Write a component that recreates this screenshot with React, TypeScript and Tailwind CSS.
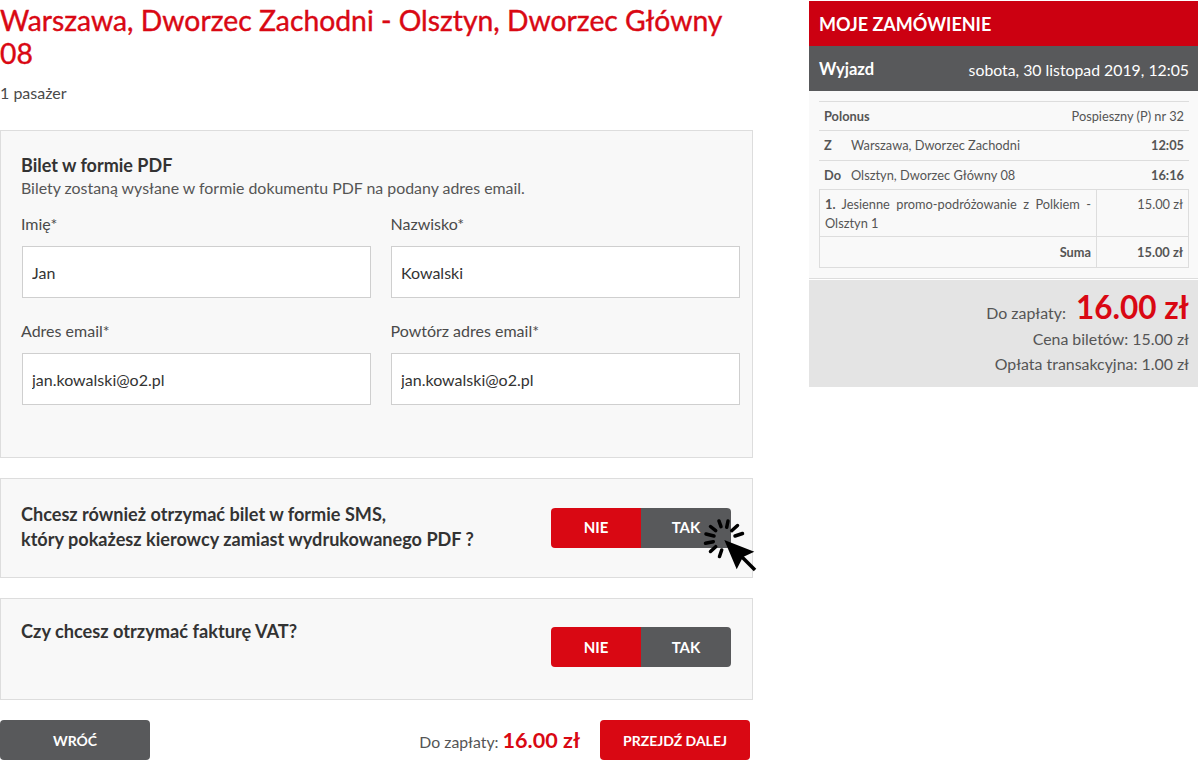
import React from "react";

function Field({ label, value, outdent }: { label: string; value: string; outdent?: boolean }) {
  return (
    <div className="w-[349px]">
      <div className={outdent ? "text-[16px] leading-[20px] text-[#4a4a4a] -ml-px mb-3" : "text-[16px] leading-[20px] text-[#4a4a4a] -ml-[0.5px] mb-3"}>
        {label}
      </div>
      <input
        readOnly
        value={value}
        className="block w-full h-[52px] px-[9px] border border-[#cfcfcf] bg-white text-[16px] text-[#333] outline-none"
      />
    </div>
  );
}

function Toggle() {
  return (
    <div className="flex w-[180px] h-10 text-[15px] font-bold text-white">
      <div className="w-[90px] flex items-center justify-center bg-[#d90813] rounded-l">NIE</div>
      <div className="w-[90px] flex items-center justify-center bg-[#58595b] rounded-r">TAK</div>
    </div>
  );
}

function ClickCursor() {
  return (
    <svg className="absolute left-[702px] top-[517px]" width="56" height="56" viewBox="0 0 56 56">
      <path d="M22.300 23 L52.300 34.700 L41 40 L34.700 52.300 Z" fill="#000" />
      <path d="M38 38 L53 53" stroke="#000" strokeWidth="3.5" />
      <g stroke="#000" strokeWidth="3.500" strokeLinecap="round">
        <path d="M17 4 L19 9.700" />
        <path d="M26 4 L24.700 10.300" />
        <path d="M35.500 8.500 L29.700 13.700" />
        <path d="M40.500 16.500 L33 19" />
        <path d="M8.500 9.500 L13.700 13.700" />
        <path d="M4 17 L12 19" />
        <path d="M3.500 26.300 L11.300 24.700" />
        <path d="M8.500 34.500 L13.700 29.700" />
        <path d="M17.500 39.500 L19.700 33" />
      </g>
    </svg>
  );
}

export default function App() {
  return (
    <div className="relative w-[1198px] h-[770px] overflow-hidden bg-white font-['Lato','Open_Sans',sans-serif] text-[#4a4a4a]">
      <div className="flex items-start">
        <div className="w-[753px] shrink-0">
          <h1 className="w-[740px] mt-[4px] text-[28.3px] leading-[33px] font-normal text-[#d90813] [-webkit-text-stroke:0.4px_#d90813]">
            Warszawa, Dworzec Zachodni - Olsztyn, Dworzec Główny 08
          </h1>
          <div className="mt-[13px] text-[16px] leading-[20px]">1 pasażer</div>

          <div className="mt-[27px] h-[328px] border border-[#dddddd] bg-[#f8f8f8] pl-5 pt-[23px]">
            <div className="text-[18px] leading-[22px] font-bold text-[#333]">Bilet w formie PDF</div>
            <div className="text-[15.9px] leading-[20px] mt-[2px] text-[#555]">
              Bilety zostaną wysłane w formie dokumentu PDF na podany adres email.
            </div>
            <div className="mt-[16px] ml-px grid grid-cols-[349px_349px] gap-x-[20px] gap-y-[23px]">
              <Field label="Imię*" value="Jan" outdent />
              <Field label="Nazwisko*" value="Kowalski" />
              <Field label="Adres email*" value="jan.kowalski@o2.pl" outdent />
              <Field label="Powtórz adres email*" value="jan.kowalski@o2.pl" />
            </div>
          </div>

          <div className="mt-5 h-[100px] border border-[#dddddd] bg-[#f8f8f8] pl-5 pr-[21px] flex items-center justify-between">
            <div className="-mt-[3px] text-[18.1px] leading-[25px] font-bold text-[#333]">
              Chcesz również otrzymać bilet w formie SMS,
              <br />
              który pokażesz kierowcy zamiast wydrukowanego PDF ?
            </div>
            <div className="-mt-px">
              <Toggle />
            </div>
          </div>

          <div className="mt-5 h-[102px] border border-[#dddddd] bg-[#f8f8f8] pl-5 pr-[21px] pt-[28px] flex items-start justify-between">
            <div className="text-[18.2px] leading-[27px] -mt-[9px] font-bold text-[#333]">Czy chcesz otrzymać fakturę VAT?</div>
            <Toggle />
          </div>

          <div className="mt-5 w-[750px] flex items-center">
            <div className="w-[150px] h-10 rounded bg-[#58595b] text-white text-[14px] font-bold flex items-center justify-center">
              WRÓĆ
            </div>
            <div className="ml-auto mr-5 flex items-baseline gap-[4px] text-[#555]">
              <span className="text-[15.8px]">Do zapłaty:</span>
              <span className="text-[21.6px] font-bold text-[#d90813]">16.00 zł</span>
            </div>
            <div className="w-[150px] h-10 rounded bg-[#d90813] text-white text-[14px] font-bold flex items-center justify-center">
              PRZEJDŹ DALEJ
            </div>
          </div>
        </div>

        <div className="ml-[56px] mt-[1px] w-[389px] shrink-0">
          <div className="h-[45px] pt-[2px] bg-[#cc0011] text-white text-[18px] font-bold flex items-center pl-[10px]">
            MOJE ZAMÓWIENIE
          </div>
          <div className="h-[45px] pt-[2px] bg-[#58595b] text-white flex items-center justify-between pl-[10px] pr-[9px]">
            <span className="text-[16.500px] font-bold">Wyjazd</span>
            <span className="text-[15.800px]">sobota, 30 listopad 2019, 12:05</span>
          </div>
          <div className="h-[188px] bg-[#f9f9f9] border-b border-[#dddddd] pt-[10px] pl-[10px] pr-[9px] text-[12.800px] text-[#555]">
            <div className="h-[29px] pt-px border-t border-[#dddddd] flex items-center justify-between px-[5px]">
              <span className="font-bold">Polonus</span>
              <span>Pospieszny (P) nr 32</span>
            </div>
            <div className="h-[30px] pt-px border-t border-[#dddddd] flex items-center px-[5px]">
              <span className="w-[27px] font-bold">Z</span>
              <span>Warszawa, Dworzec Zachodni</span>
              <span className="ml-auto font-bold">12:05</span>
            </div>
            <div className="h-[29px] pt-px border-t border-[#dddddd] flex items-center px-[5px]">
              <span className="w-[27px] font-bold">Do</span>
              <span>Olsztyn, Dworzec Główny 08</span>
              <span className="ml-auto font-bold">16:16</span>
            </div>
            <div className="border border-[#dddddd]">
              <div className="h-[47px] flex border-b border-[#dddddd]">
                <div className="w-[277px] border-r border-[#dddddd] px-[5px] pt-[5px] leading-[19px] text-justify">
                  <b>1.</b> Jesienne promo-podróżowanie z Polkiem - Olsztyn 1
                </div>
                <div className="flex-1 text-right pr-[5px] pt-[5px] leading-[19px]">15.00 zł</div>
              </div>
              <div className="h-[30px] flex items-center font-bold">
                <div className="w-[277px] h-full pt-[2px] border-r border-[#dddddd] pr-[5px] flex items-center justify-end">Suma</div>
                <div className="flex-1 pt-[2px] text-right pr-[5px]">15.00 zł</div>
              </div>
            </div>
          </div>
          <div className="mt-[1px] h-[107px] bg-[#e4e4e4] pr-[9px] flex flex-col items-end text-[#555] text-[15.900px]">
            <div className="h-[46px] flex items-baseline gap-[10px] pt-[8px]">
              <span>Do zapłaty:</span>
              <span className="text-[31.500px] leading-[38px] font-bold text-[#d90813]">16.00 zł</span>
            </div>
            <div className="leading-[25px]">Cena biletów: 15.00 zł</div>
            <div className="leading-[25px]">Opłata transakcyjna: 1.00 zł</div>
          </div>
        </div>
      </div>
      <ClickCursor />
    </div>
  );
}
